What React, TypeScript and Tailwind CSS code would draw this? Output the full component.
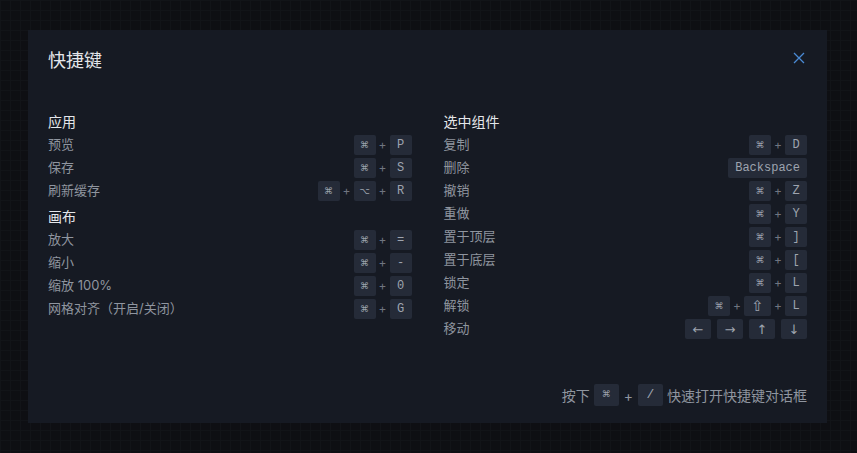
import React from 'react';

type Shortcut = { label: string; keys: string[]; joined?: boolean };
type Section = { title: string; items: Shortcut[] };

const leftSections: Section[] = [
  {
    title: '应用',
    items: [
      { label: '预览', keys: ['⌘', 'P'] },
      { label: '保存', keys: ['⌘', 'S'] },
      { label: '刷新缓存', keys: ['⌘', '⌥', 'R'] },
    ],
  },
  {
    title: '画布',
    items: [
      { label: '放大', keys: ['⌘', '='] },
      { label: '缩小', keys: ['⌘', '-'] },
      { label: '缩放 100%', keys: ['⌘', '0'] },
      { label: '网格对齐（开启/关闭）', keys: ['⌘', 'G'] },
    ],
  },
];

const rightSections: Section[] = [
  {
    title: '选中组件',
    items: [
      { label: '复制', keys: ['⌘', 'D'] },
      { label: '删除', keys: ['Backspace'] },
      { label: '撤销', keys: ['⌘', 'Z'] },
      { label: '重做', keys: ['⌘', 'Y'] },
      { label: '置于顶层', keys: ['⌘', ']'] },
      { label: '置于底层', keys: ['⌘', '['] },
      { label: '锁定', keys: ['⌘', 'L'] },
      { label: '解锁', keys: ['⌘', '⇧', 'L'] },
      { label: '移动', keys: ['←', '→', '↑', '↓'], joined: false },
    ],
  },
];

const Key = ({ k }: { k: string }) => {
  const arrow = ['←', '→', '↑', '↓'].includes(k);
  const small = k === '⌘' || k === '⌥';
  return (
    <kbd
      className={`flex h-[20px] items-center justify-center rounded-[2px] bg-[#252b38] leading-none text-[#9ea4af] ${
        arrow
          ? "min-w-[26px] px-[6px] font-['DejaVu_Sans',sans-serif] text-[13px]"
          : k === '⇧'
            ? "w-[27px] font-['DejaVu_Sans',sans-serif] text-[15px]"
            : small
              ? "w-[22px] font-['DejaVu_Sans',sans-serif] text-[9px]"
              : "min-w-[22px] px-[7px] font-['Liberation_Mono',monospace] text-[12px]"
      }`}
    >
      {k}
    </kbd>
  );
};

const Row = ({ item }: { item: Shortcut }) => (
  <div className="flex h-[20px] items-center justify-between">
    <span className="text-[13px] text-[#8f959f]">{item.label}</span>
    <div className={`flex items-center ${item.joined === false ? 'gap-[6px]' : ''}`}>
      {item.keys.map((k, i) => (
        <React.Fragment key={i}>
          {i > 0 && item.joined !== false && (
            <span className="w-[14px] text-center text-[12px] text-[#6f7580]">+</span>
          )}
          <Key k={k} />
        </React.Fragment>
      ))}
    </div>
  </div>
);

const Column = ({ sections }: { sections: Section[] }) => (
  <div className="flex flex-col gap-[3px]">
    {sections.map((s, si) => (
      <React.Fragment key={s.title}>
        <div
          className={`flex h-[22px] items-center text-[14px] text-[#e4e6ea] ${si > 0 ? 'mt-[1px]' : ''}`}
        >
          {s.title}
        </div>
        {s.items.map((item) => (
          <Row key={item.label} item={item} />
        ))}
      </React.Fragment>
    ))}
  </div>
);

export default function App() {
  return (
    <div className="h-[453px] w-[857px] overflow-hidden bg-[#0e0f13] [background-image:linear-gradient(to_right,#121418_1px,transparent_1px),linear-gradient(to_bottom,#121418_1px,transparent_1px)] [background-size:10px_10px] pt-[30px] pl-[28px] font-['Inter','Noto_Sans_CJK_SC',sans-serif]">
      <div className="flex h-[393px] w-[799px] flex-col bg-[#161a23] px-5 pt-4 pb-[17px]">
        <div className="flex h-7 items-center justify-between">
          <h2 className="text-[18px] text-[#e4e6ea]">快捷键</h2>
          <button className="-mt-1 mr-[2px] text-[#4a8ad4]">
            <svg width="12" height="12" viewBox="0 0 12 12" fill="none" stroke="currentColor" strokeWidth="1.3">
              <path d="M1 1L11 11M11 1L1 11" />
            </svg>
          </button>
        </div>
        <div className="mt-9 grid grid-cols-2 gap-8">
          <Column sections={leftSections} />
          <Column sections={rightSections} />
        </div>
        <div className="mt-auto flex items-center justify-end gap-[4px] text-[14px] text-[#8f959f]">
          <span>按下</span>
          <kbd className="flex h-[22px] min-w-[25px] items-center justify-center rounded-[2px] bg-[#252b38] font-['DejaVu_Sans',sans-serif] text-[9px] text-[#9ea4af]">
            ⌘
          </kbd>
          <span className="px-[1px] text-[#8f959f]">+</span>
          <kbd className="flex h-[22px] min-w-[25px] items-center justify-center rounded-[2px] bg-[#252b38] font-['Liberation_Mono',monospace] text-[13px] text-[#9ea4af]">
            /
          </kbd>
          <span>快速打开快捷键对话框</span>
        </div>
      </div>
    </div>
  );
}
